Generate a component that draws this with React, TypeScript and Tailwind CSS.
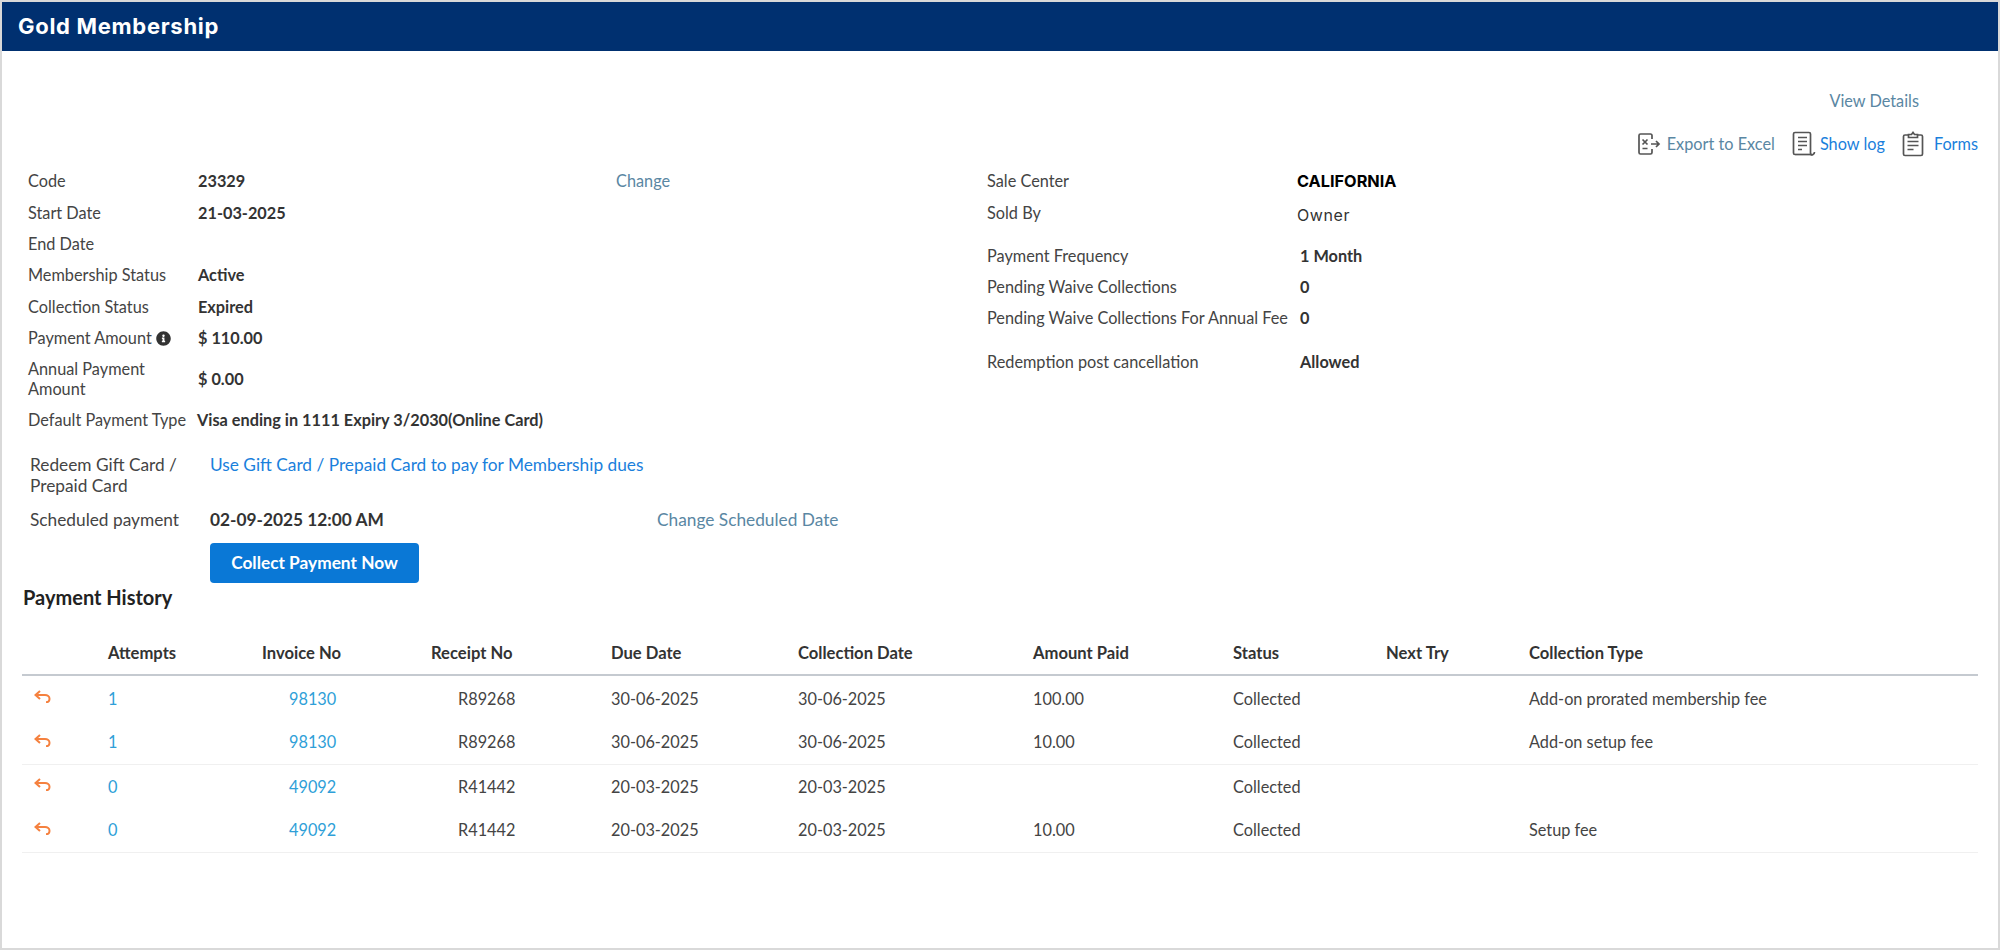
import { FaInfoCircle } from 'react-icons/fa';

const leftRows = [
  { label: 'Code', value: '23329' },
  { label: 'Start Date', value: '21-03-2025' },
  { label: 'End Date', value: '' },
  { label: 'Membership Status', value: 'Active' },
  { label: 'Collection Status', value: 'Expired' },
];

const payments = [
  { attempts: '1', invoice: '98130', receipt: 'R89268', due: '30-06-2025', collected: '30-06-2025', paid: '100.00', type: 'Add-on prorated membership fee', line: false },
  { attempts: '1', invoice: '98130', receipt: 'R89268', due: '30-06-2025', collected: '30-06-2025', paid: '10.00', type: 'Add-on setup fee', line: true },
  { attempts: '0', invoice: '49092', receipt: 'R41442', due: '20-03-2025', collected: '20-03-2025', paid: '', type: '', line: false },
  { attempts: '0', invoice: '49092', receipt: 'R41442', due: '20-03-2025', collected: '20-03-2025', paid: '10.00', type: 'Setup fee', line: true },
];

const tableCols = 'grid grid-cols-[86px_154px_169px_180px_187px_235px_200px_153px_143px_449px]';

function ExcelIcon() {
  return (
    <svg width="24" height="24" viewBox="0 0 24 24" fill="none" stroke="#555" strokeWidth="1.7">
      <path d="M15 7V3.5C15 2.7 14.5 2 13.5 2H3.5C2.5 2 2 2.7 2 3.500V20.500C2 21.300 2.500 22 3.500 22H13.500C14.500 22 15 21.300 15 20.500V17" />
      <path d="M5.500 7.500l5 5M10.500 7.500l-5 5M5.500 16.500h5" />
      <path d="M14 12h8M19 9l3 3-3 3" />
    </svg>
  );
}

function LogIcon() {
  return (
    <svg width="26" height="26" viewBox="0 0 26 26" fill="none" stroke="#555" strokeWidth="1.7">
      <path d="M3 23.500c-1 0-1.500-.5-1.500-1.500V3c0-1 .5-1.500 1.500-1.500h14c1 0 1.500.5 1.500 1.500v19c0 1.500 1 2.500 2.500 1.500 1-.5 1.500-1.500 1.500-2.500" />
      <path d="M3 23.500h17" />
      <path d="M6 6.500h9M6 10.500h9M6 14.500h9M6 18.500h4" />
    </svg>
  );
}

function FormsIcon() {
  return (
    <svg width="22" height="26" viewBox="0 0 22 26" fill="none" stroke="#555" strokeWidth="1.7">
      <path d="M6.500 4H3C1.800 4 1.500 4.700 1.500 5.500V23c0 1 .5 1.500 1.500 1.500h16c1 0 1.500-.5 1.500-1.500V5.500c0-.8-.3-1.500-1.500-1.500h-3.500" />
      <path d="M6.500 6.500V3.500h3L11 1.500l1.500 2h3v3z" />
      <path d="M5.500 10.500h11M5.500 14.500h11M5.500 18.500h6" />
    </svg>
  );
}

function RefundIcon() {
  return (
    <svg className="ml-[12px] -translate-y-[2px]" width="17" height="13" viewBox="0 0 17 13" fill="none" stroke="#f5813f" strokeWidth="2">
      <path d="M6 1 1.500 5 6 9" />
      <path d="M1.500 5H11c2.500 0 4.500 1.500 4.500 3.700S14 12.200 12 12.200" />
    </svg>
  );
}

export default function App() {
  return (
    <div className="h-[950px] w-[2000px] border-2 border-[#d9d9d9] bg-white font-['Lato',sans-serif] text-[16.3px] text-[#444]">
      <div className="flex h-[49px] items-center bg-[#003070] pl-4 font-['Inter',sans-serif] text-[22px] font-bold tracking-[0.7px] text-white">
        Gold Membership
      </div>

      <div className="flex h-[115px] flex-col items-end">
        <a className="mt-[38px] mr-[79px] text-[#5a87a3]">View Details</a>
        <div className="mt-[18px] mr-[20px] flex items-center">
          <ExcelIcon />
          <a className="ml-[6px] text-[#5a87a3]">Export to Excel</a>
          <span className="ml-[17px]"><LogIcon /></span>
          <a className="ml-[2px] text-[#1a80dc]">Show log</a>
          <span className="ml-[17px]"><FormsIcon /></span>
          <a className="ml-[10px] text-[#1a80dc]">Forms</a>
        </div>
      </div>

      <div className="flex">
        <div className="w-[985px] pl-[26px]">
          {leftRows.map((row) => (
            <div key={row.label} className="grid h-[31.3px] grid-cols-[170px_418px_1fr] items-center">
              <span>{row.label}</span>
              <span className="font-bold text-[#333]">{row.value}</span>
              {row.label === 'Code' && <a className="text-[#5a87a3]">Change</a>}
            </div>
          ))}
          <div className="grid h-[31.3px] grid-cols-[170px_1fr] items-center">
            <span className="flex items-center gap-1">Payment Amount <FaInfoCircle className="h-[15px] w-[15px] text-[#333]" /></span>
            <span className="font-bold text-[#333]">$ 110.00</span>
          </div>
          <div className="grid h-[51px] grid-cols-[170px_1fr] items-center">
            <span className="leading-[20px]">Annual Payment<br />Amount</span>
            <span className="font-bold text-[#333]">$ 0.00</span>
          </div>
          <div className="grid h-[31px] grid-cols-[169px_1fr] items-center">
            <span className="whitespace-nowrap">Default Payment Type</span>
            <span className="font-bold text-[#333]">Visa ending in 1111 Expiry 3/2030(Online Card)</span>
          </div>

          <div className="mt-[18px] ml-[2px] text-[17.3px]">
            <div className="grid grid-cols-[180px_1fr]">
              <span className="leading-[21px]">Redeem Gift Card /<br />Prepaid Card</span>
              <a className="leading-[21px] text-[#1a80dc]">Use Gift Card / Prepaid Card to pay for Membership dues</a>
            </div>
            <div className="mt-[11px] grid h-[24px] grid-cols-[180px_447px_1fr] items-center">
              <span>Scheduled payment</span>
              <span className="font-bold text-[#333]">02-09-2025 12:00 AM</span>
              <a className="text-[#5a87a3]">Change Scheduled Date</a>
            </div>
            <button className="mt-[12px] ml-[180px] h-[40px] w-[209px] rounded-[4px] bg-[#0a78d6] font-bold text-white">
              Collect Payment Now
            </button>
          </div>
        </div>

        <div className="flex-1">
          <div className="grid h-[31px] grid-cols-[310px_1fr] items-center">
            <span>Sale Center</span>
            <span className="font-['Inter',sans-serif] text-[16.3px] font-bold text-black">CALIFORNIA</span>
          </div>
          <div className="grid h-[33px] grid-cols-[310px_1fr] items-center">
            <span>Sold By</span>
            <span className="mt-[2px] font-['Inter',sans-serif] text-[16px] tracking-[0.6px] text-[#333]">Owner</span>
          </div>
          <div className="mt-[11px]">
            <div className="grid h-[31px] grid-cols-[313px_1fr] items-center">
              <span>Payment Frequency</span>
              <span className="font-bold text-[#333]">1 Month</span>
            </div>
            <div className="grid h-[31px] grid-cols-[313px_1fr] items-center">
              <span>Pending Waive Collections</span>
              <span className="font-bold text-[#333]">0</span>
            </div>
            <div className="grid h-[31px] grid-cols-[313px_1fr] items-center">
              <span>Pending Waive Collections For Annual Fee</span>
              <span className="font-bold text-[#333]">0</span>
            </div>
          </div>
          <div className="mt-[13px] grid h-[31px] grid-cols-[313px_1fr] items-center">
            <span>Redemption post cancellation</span>
            <span className="font-bold text-[#333]">Allowed</span>
          </div>
        </div>
      </div>

      <div className="mx-[20px]">
        <h2 className="ml-px text-[20px] leading-[28px] font-bold text-[#222]">Payment History</h2>
        <div className={`${tableCols} mt-[25px] mb-px h-[40px] items-center border-b-2 border-[#c5cad0] pb-[3px] text-[16.6px] font-bold text-[#333]`}>
          <span />
          <span>Attempts</span>
          <span>Invoice No</span>
          <span>Receipt No</span>
          <span>Due Date</span>
          <span>Collection Date</span>
          <span>Amount Paid</span>
          <span>Status</span>
          <span>Next Try</span>
          <span>Collection Type</span>
        </div>
        {payments.map((p, i) => (
          <div key={i} className={`${tableCols} h-[44px] items-center ${p.line ? 'border-b border-[#f0f0f0]' : ''}`}>
            <RefundIcon />
            <a className="text-[#2f9fd8]">{p.attempts}</a>
            <a className="pl-[27px] text-[#2f9fd8]">{p.invoice}</a>
            <span className="pl-[27px]">{p.receipt}</span>
            <span>{p.due}</span>
            <span>{p.collected}</span>
            <span>{p.paid}</span>
            <span>Collected</span>
            <span />
            <span>{p.type}</span>
          </div>
        ))}
      </div>
    </div>
  );
}
